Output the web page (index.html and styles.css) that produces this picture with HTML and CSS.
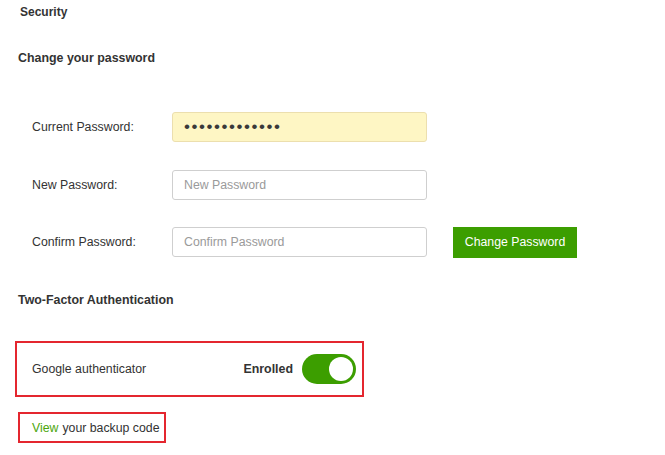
FILE: index.html
```html
<!DOCTYPE html>
<html>
<head>
<meta charset="utf-8">
<link rel="stylesheet" href="styles.css">
</head>
<body>
<div class="page">
  <div class="title">Security</div>
  <div class="subtitle sub-first">Change your password</div>
  <form class="pw-form">
    <div class="row">
      <label class="label">Current Password:</label>
      <input class="field field-filled" type="password" value="abcdefghijklm">
    </div>
    <div class="row">
      <label class="label">New Password:</label>
      <input class="field" type="password" placeholder="New Password">
    </div>
    <div class="row row-last">
      <label class="label">Confirm Password:</label>
      <input class="field" type="password" placeholder="Confirm Password">
      <button class="btn" type="button">Change Password</button>
    </div>
  </form>
  <div class="subtitle sub-2fa">Two-Factor Authentication</div>
  <div class="auth-box">
    <span class="auth-name">Google authenticator</span>
    <div class="auth-status">
      <span class="enrolled">Enrolled</span>
      <span class="toggle"><span class="knob"></span></span>
    </div>
  </div>
  <div class="backup-box"><a class="view-link" href="#">View</a> your backup code</div>
</div>
</body>
</html>
```

FILE: styles.css
```css
* { box-sizing: border-box; }
body {
  margin: 0;
  background: #fff;
  font-family: "Liberation Sans", Arial, sans-serif;
  font-size: 12.3px;
  color: #333;
}
.page {
  padding: 4px 0 0 18px;
}
.title {
  margin-left: 2px;
  font-weight: bold;
  font-size: 12px;
  line-height: 16px;
}
.subtitle {
  font-weight: bold;
  font-size: 12.4px;
  line-height: 16px;
}
.sub-first { margin-top: 30px; }
.pw-form {
  margin-top: 46px;
  display: flex;
  flex-direction: column;
  gap: 28px;
}
.row {
  display: flex;
  align-items: center;
  height: 30px;
}
.row-last { margin-top: -1px; }
.label {
  width: 154px;
  padding-left: 14px;
  font-size: 12.3px;
  color: #333;
}
.field {
  width: 255px;
  height: 30px;
  border: 1px solid #cfcfcf;
  border-radius: 3px;
  padding: 0 11px;
  font-family: "Liberation Sans", Arial, sans-serif;
  font-size: 12.3px;
  color: #333;
  background: #fff;
  outline: none;
}
.field::placeholder { color: #9a9a9a; }
.field-filled {
  background: #fef6c4;
  border-color: #ecdfae;
  font-size: 17px;
  letter-spacing: 1.55px;
  color: #3a3a3a;
}
.btn {
  margin-left: 26px;
  width: 124px;
  height: 31px;
  border: none;
  background: #3c9e00;
  color: #fff;
  font-family: "Liberation Sans", Arial, sans-serif;
  font-size: 12.3px;
  padding: 0;
}
.sub-2fa { margin-top: 35px; }
.auth-box {
  margin-top: 33px;
  margin-left: -3px;
  width: 349px;
  height: 56px;
  border: 2px solid #e4262f;
  display: flex;
  align-items: center;
  justify-content: space-between;
  padding: 0 6px 0 15px;
}
.auth-name { font-size: 12.3px; color: #333; }
.auth-status {
  display: flex;
  align-items: center;
  gap: 9px;
}
.enrolled {
  font-weight: bold;
  font-size: 12.4px;
  color: #333;
}
.toggle {
  width: 54px;
  height: 30px;
  border-radius: 15px;
  background: #3c9e00;
  display: flex;
  align-items: center;
  justify-content: flex-end;
  padding-right: 3px;
}
.knob {
  width: 24px;
  height: 24px;
  border-radius: 50%;
  background: #fff;
}
.backup-box {
  margin-top: 15px;
  width: 148px;
  height: 31px;
  border: 2px solid #e4262f;
  display: flex;
  align-items: center;
  padding-left: 12px;
  font-size: 12.3px;
  color: #333;
}
.view-link {
  color: #4ba60c;
  text-decoration: none;
  margin-right: 4px;
}
```
